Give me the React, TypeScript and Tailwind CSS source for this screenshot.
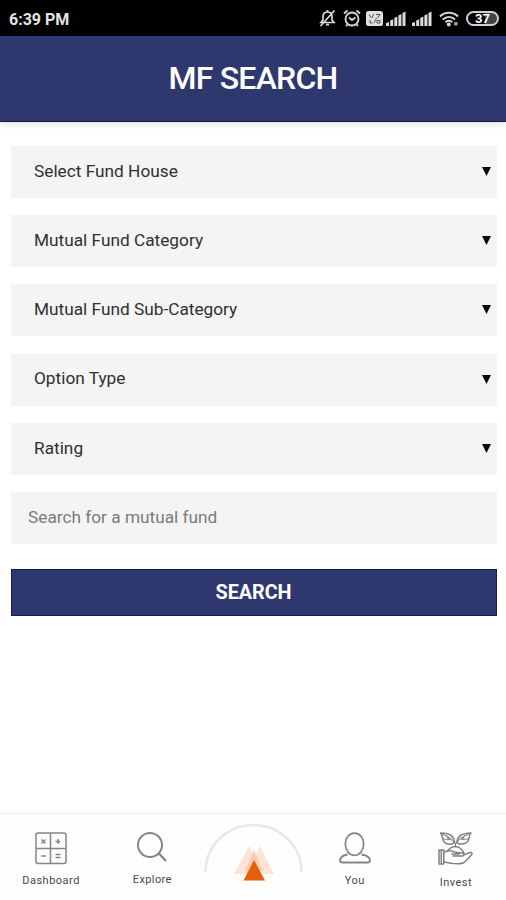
import type { ReactNode } from 'react';

const FILTERS = ['Select Fund House', 'Mutual Fund Category', 'Mutual Fund Sub-Category', 'Option Type', 'Rating'];

function SignalIcon() {
  return (
    <svg width="20" height="15" viewBox="0 0 20 15" fill="#dcdcdc" aria-hidden="true">
      <path d="M0 15v-3l3-1v4zM4.2 15v-5.5l3-1.2V15zM8.3 15V7l3-1.4V15zM12.4 15V4.4l3-1.5V15zM16.5 15V2l3-1.6V15z" />
    </svg>
  );
}

function StatusBar() {
  return (
    <div className="flex h-9 items-center bg-black pl-[9px] pr-[7px] text-white">
      <span className="mt-[3px] text-base font-bold leading-none text-[#e4e4e4]">6:39 PM</span>
      <div className="ml-auto flex items-center">
        <svg className="mr-[7px]" width="17" height="18" viewBox="0 0 17 18" fill="none" stroke="#d8d8d8" strokeWidth="1.7" aria-hidden="true">
          <path d="M2 13.5h13l-2-2.5V7.5C13 4.8 11.2 3 8.5 3S4 4.8 4 7.5V11zM8.5 1v2M7 15.7h3M1.5 17l14-15.5" />
        </svg>
        <svg className="mr-[5px]" width="18" height="18" viewBox="0 0 18 18" fill="none" stroke="#d8d8d8" strokeWidth="1.8" aria-hidden="true">
          <circle cx="9" cy="10" r="6.5" />
          <path d="M1 4.5l3.5-3M17 4.5l-3.5-3M6 8.5l3 2.5 3.500-2.500M4.500 15.500 3 17M13.500 15.500l1.500 1.500" />
        </svg>
        <svg className="mr-[3px]" width="17" height="15" viewBox="0 0 17 15" aria-hidden="true">
          <rect width="17" height="15" rx="2.5" fill="#dedede" />
          <path d="M3 3.500 5.500 7 8 3M10 3.500h4L11.500 7M4 9v3h2.500M8 12l2.500-5M11 9.500h3V12h-3z" fill="none" stroke="#555" strokeWidth="1" />
        </svg>
        <span className="mr-[6px]"><SignalIcon /></span>
        <span className="mr-[7px]"><SignalIcon /></span>
        <svg className="mr-[6px] mt-px" width="21" height="16" viewBox="0 0 21 16" fill="none" stroke="#d8d8d8" strokeWidth="2" aria-hidden="true">
          <path d="M1 5.500c5-5 13-5 18 0M3.800 8.500c3.800-3.500 8.500-3.500 12.200 0M6.500 11.200c2-2 4.800-2 6.800 0" />
          <circle cx="9.8" cy="13.5" r="1" fill="#d8d8d8" />
          <circle cx="16.8" cy="12.8" r="2" fill="#999" stroke="none" />
        </svg>
        <div className="flex h-[15px] w-[33px] items-center justify-center rounded-full border-2 border-[#d0d0d0] bg-[linear-gradient(90deg,#000_60%,#444_60%)] text-[13px] font-bold leading-none">
          37
        </div>
      </div>
    </div>
  );
}

function SelectField({ label }: { label: string }) {
  return (
    <button type="button" className="flex h-[52px] w-full items-center bg-[#f4f4f4] pl-[23px] pr-[6px] text-left text-[17.25px] text-[#303030]">
      <span className="-mt-[0.5px]">{label}</span>
      <svg className="-mt-px ml-auto" width="9" height="9" viewBox="0 0 9 9" aria-hidden="true">
        <path d="M0 0h9L4.500 9z" fill="#080808" />
      </svg>
    </button>
  );
}

function NavItem({ label, labelClass, children }: { label: string; labelClass: string; children: ReactNode }) {
  return (
    <a className="flex flex-col items-center pl-px pt-[17px]">
      <span className="flex h-[35px] items-start">{children}</span>
      <span className={`text-[11px] leading-[14px] text-[#484848] ${labelClass}`}>{label}</span>
    </a>
  );
}

function BottomNav() {
  return (
    <nav className="mt-auto grid h-[87px] grid-cols-5 border-t border-[#f3f3f3] bg-[#fefefe]">
      <NavItem label="Dashboard" labelClass="mt-[8px] tracking-[0.5px]">
        <svg className="mt-px" width="32" height="33" viewBox="0 0 32 33" fill="none" stroke="#858585" strokeWidth="1.5" aria-hidden="true">
          <rect x="1" y="1" width="30" height="30.5" rx="2" />
          <path d="M15.500 1v30.500M1 16.500h30" />
          <path d="m6.500 7.500 4 4m0-4-4 4M20.500 9.500h5M23 7v5M6 24h5M20.500 22.500h5M20.500 25.500h5" />
        </svg>
      </NavItem>
      <NavItem label="Explore" labelClass="mt-[7px] tracking-[0.4px]">
        <svg className="mt-px" width="31" height="31" viewBox="0 0 31 31" fill="none" stroke="#858585" strokeWidth="2" aria-hidden="true">
          <circle cx="13" cy="13" r="12" />
          <path d="m21.500 21 7.500 8" strokeWidth="2.3" />
        </svg>
      </NavItem>
      <div className="flex justify-center pl-[2px] pt-[9px]">
        <svg className="shrink-0" width="100" height="60" viewBox="0 0 100 60" aria-hidden="true">
          <path d="M1.500 49a48 47 0 0 1 96 0" fill="none" stroke="#e8e8e8" strokeWidth="2.5" />
          <path d="M45 23 60 51H30z" fill="#fce5d7" />
          <path d="M56 23 70 51H41z" fill="#fce5d7" />
          <path d="m50 27 9 21H41z" fill="#f8cfb6" />
          <path d="M50 37 61 57.500H39.500z" fill="#e65f0b" />
        </svg>
      </div>
      <NavItem label="You" labelClass="mt-[8px] tracking-[0.5px]">
        <svg className="mt-px" width="32" height="33" viewBox="0 0 32 33" fill="none" stroke="#858585" strokeWidth="1.8" aria-hidden="true">
          <path d="M15.500 1.200c5.300 0 9.200 4.600 9.200 10.600 0 6.300-4 11.600-9.200 11.600S6.300 18.100 6.300 11.800c0-6 3.900-10.600 9.200-10.600z" />
          <path d="M8.500 22.500c-4.800 1-7.500 3-7.500 6 0 1.500.8 2 2.500 2h25c1.700 0 2.500-.5 2.500-2 0-3-2.700-5-8.500-6" />
        </svg>
      </NavItem>
      <NavItem label="Invest" labelClass="mt-[10px] tracking-[0.5px]">
        <svg className="mt-px" width="35" height="34" viewBox="0 0 35 34" fill="none" stroke="#808080" strokeWidth="1.5" strokeLinejoin="round" strokeLinecap="round" aria-hidden="true">
          <path d="M16.500 10.500c-2 2.500-9 2.500-11-1.500C4 6 4.500 3 2.500 1c6 0 14 1 14 9.500zM19 10.500c2 2.500 9 2 11-1.500 1.500-3 1-6 3-8-7 0-14 1.500-14 9.500z" />
          <path d="M5 2.500c4 1.500 9 3.500 12.500 9.500V15M30 2.500c-4 1.500-9.500 4-12.500 9.500M8.500 3.500l2 3.500M5.500 7l6.500.5M26.500 3.500l-2 3.500M29.500 7l-6 .5" strokeWidth="1.1" />
          <path d="M1 18h4.800v14H1zM3.300 18.500v13" />
          <path d="M9.500 19c1.500-2 5-4.500 8-4.500 3.500 0 7 3.500 8.500 6.500" />
          <path d="M6 20.500c2.500-1.800 7-2 10.500-.5 2 .8 5 .8 8 1 2 .2 1.800 3-.2 3H15M14 22h7M25.500 23c3-.5 4.500-2.500 7-2.500 2 0 1.800 1.300.8 2.500-3 3.500-5.200 6.500-8.300 8-4 1.500-9 .7-12 .3L6 30" />
        </svg>
      </NavItem>
    </nav>
  );
}

export default function App() {
  return (
    <div className="flex h-[900px] w-[506px] flex-col overflow-hidden bg-white font-[Roboto,sans-serif]">
      <StatusBar />
      <header className="flex h-[86px] items-center justify-center border-b border-[#16195e] bg-[#2e386f] shadow-[0_2px_7px_rgba(0,0,0,0.13)]">
        <h1 className="-mt-[2px] text-[32px] font-medium leading-none tracking-[-0.8px] text-white">MF SEARCH</h1>
      </header>
      <main className="flex flex-col gap-[17.2px] pl-[11px] pr-[9px] pt-6">
        {FILTERS.map((label) => (
          <SelectField key={label} label={label} />
        ))}
        <input
          type="text"
          placeholder="Search for a mutual fund"
          className="h-[52px] w-full bg-[#f4f4f4] px-[17px] pb-[2px] text-[17.25px] text-[#303030] placeholder:text-[#7b7b7b]"
        />
        <button type="button" className="mt-[8px] h-[47px] border border-[#16195e] bg-[#2e386f] pr-px text-[19.75px] font-bold text-white">
          SEARCH
        </button>
      </main>
      <BottomNav />
    </div>
  );
}
